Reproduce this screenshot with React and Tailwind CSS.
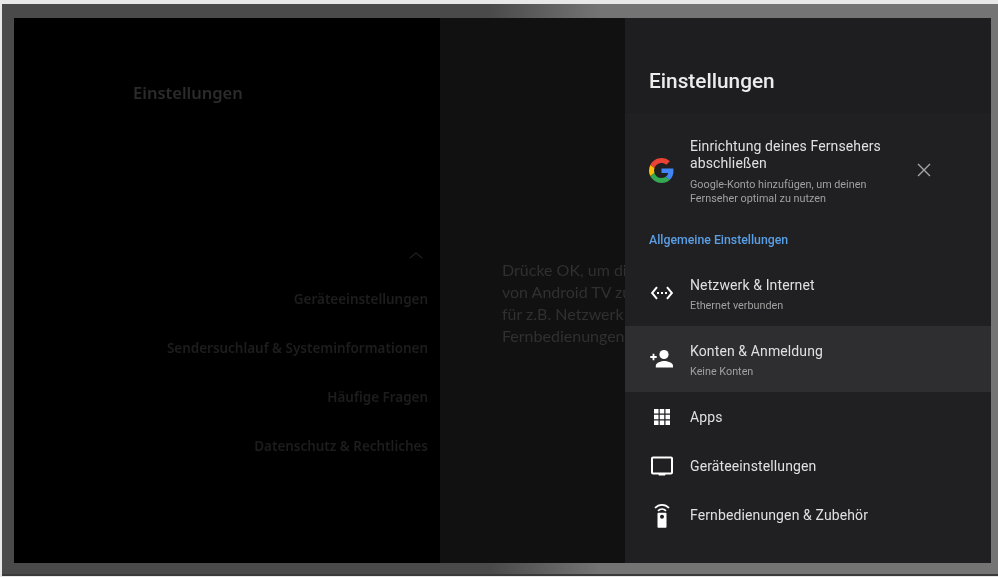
const roboto = { fontFamily: "Roboto, sans-serif" };

const GoogleIcon = () => (
  <svg viewBox="0 0 48 48" className="w-[25px] h-[25px] shrink-0">
    <path fill="#EA4335" d="M24 9.5c3.54 0 6.71 1.22 9.21 3.6l6.85-6.85C35.9 2.38 30.47 0 24 0 14.62 0 6.51 5.38 2.56 13.22l7.98 6.19C12.43 13.72 17.74 9.5 24 9.5z" />
    <path fill="#4285F4" d="M46.98 24.55c0-1.57-.15-3.09-.38-4.55H24v9.02h12.94c-.58 2.96-2.26 5.48-4.78 7.18l7.73 6c4.51-4.18 7.09-10.36 7.09-17.65z" />
    <path fill="#FBBC05" d="M10.53 28.59c-.48-1.45-.76-2.99-.76-4.59s.27-3.14.76-4.59l-7.98-6.19C.92 16.46 0 20.12 0 24c0 3.88.92 7.54 2.56 10.78l7.97-6.19z" />
    <path fill="#34A853" d="M24 48c6.48 0 11.93-2.13 15.89-5.81l-7.73-6c-2.15 1.45-4.92 2.3-8.16 2.3-6.26 0-11.57-4.22-13.47-9.91l-7.98 6.19C6.51 42.62 14.62 48 24 48z" />
  </svg>
);

const EthernetIcon = () => (
  <svg viewBox="0 0 24 24" className="w-[24px] h-[24px]" fill="#fff">
    <path d="M7.77 6.76L6.23 5.48.82 12l5.41 6.52 1.54-1.28L3.42 12l4.35-5.24zM7 13h2v-2H7v2zm10-2h-2v2h2v-2zm-6 2h2v-2h-2v2zm6.77-7.52l-1.54 1.28L20.58 12l-4.35 5.24 1.54 1.28L23.18 12l-5.41-6.52z" />
  </svg>
);

const PersonAddIcon = () => (
  <svg viewBox="0 -2 24 24" className="w-[24px] h-[24px]" fill="#fff">
    <path d="M.3 7.100h2.300V4.800h1.800v2.300h2.300v1.800H4.400v2.300H2.600V8.900H.3z" />
    <circle cx="14" cy="5.500" r="4.600" />
    <path d="M5.800 18.500v-1.800c0-3.100 5.700-4.700 8.500-4.700s8.700 1.600 8.700 4.700v1.800z" />
  </svg>
);

const AppsIcon = () => (
  <svg viewBox="0 0 24 24" className="w-[24px] h-[24px]" fill="#fff">
    <path d="M4 4h4.500v4.500H4zM9.750 4h4.500v4.500h-4.500zM15.500 4H20v4.500h-4.500zM4 9.750h4.500v4.500H4zM9.750 9.750h4.500v4.500h-4.500zM15.500 9.750H20v4.500h-4.500zM4 15.500h4.500V20H4zM9.750 15.500h4.500V20h-4.500zM15.500 15.500H20V20h-4.500z" />
  </svg>
);

const TvIcon = () => (
  <svg viewBox="0 0 24 24" className="w-[24px] h-[24px]" fill="#fff">
    <path d="M21 2.500H3c-1.100 0-2 .9-2 2v14c0 1.100.9 2 2 2h5.500c0 .6.4 1 1 1h5c.6 0 1-.4 1-1H21c1.100 0 2-.9 2-2l.02-14c0-1.100-.92-2-2.020-2zm0 16H3v-14h18v14z" />
  </svg>
);

const RemoteIcon = () => (
  <svg viewBox="0 0 24 30" className="w-[24px] h-[30px]">
    <path d="M5 8c4-4.200 10-4.200 14 0" fill="none" stroke="#fff" strokeWidth="1.800" />
    <path d="M8 10.800c2.300-2.200 5.700-2.200 8 0" fill="none" stroke="#fff" strokeWidth="1.800" />
    <path fill="#fff" fillRule="evenodd" d="M8.500 12.800h7c.6 0 1 .4 1 1v13c0 .6-.4 1-1 1h-7c-.6 0-1-.4-1-1v-13c0-.6.4-1 1-1zM12 14.800a2 2 0 1 0 0 4 2 2 0 0 0 0-4z" />
  </svg>
);

const Row = ({ icon, title, subtitle, active, tall }) => (
  <div className={`flex items-center pl-6 ${tall ? "h-[66px]" : "h-[49px]"} ${active ? "bg-[#2e2e31]" : ""}`}>
    <div className="w-[25px] flex justify-center shrink-0">{icon}</div>
    <div className={`ml-4 ${subtitle ? "mt-[2px]" : ""}`}>
      <div className="text-[14px] leading-[20px] text-[#e0e0e0] tracking-[0.12px]">{title}</div>
      {subtitle && <div className="text-[10.800px] leading-[14px] mt-[4px] text-[#a0a0a0]">{subtitle}</div>}
    </div>
  </div>
);

const LeftItem = ({ children }) => (
  <div className="h-[49px] flex items-center justify-end text-[13.450px] font-semibold text-[#1d1d1d]">{children}</div>
);

export default function App() {
  return (
    <div className="w-[998px] h-[577px] bg-[#e8e8e8] pt-[4px] pl-[2px] pb-[1px] overflow-hidden">
      <div className="h-full bg-[linear-gradient(to_right,#4a4a4a_0%,#4a4a4a_49%,#747474_60%,#747474_100%)] pt-[14px] pl-[12px] pr-[7px] pb-[11px] border-b-2 border-[#3a3a3a]">
        <div className="flex h-full blur-[0.4px]">
          {/* Dimmed left column */}
          <div className="w-[426px] bg-black pr-3 shrink-0" style={{ fontFamily: "'Noto Sans', sans-serif" }}>
            <div className="pl-[119px] pt-[61px] text-[16.500px] leading-[28px] font-semibold text-[#2b2b2b]">Einstellungen</div>
            <div className="flex justify-end pr-[5px] mt-[144px] h-[15px]">
              <svg viewBox="0 0 16 10" className="w-[14px] h-[9px]" fill="none" stroke="#262626" strokeWidth="1.200">
                <path d="M1 8l7-6 7 6" />
              </svg>
            </div>
            <div className="mt-[9px]">
              <LeftItem>Geräteeinstellungen</LeftItem>
              <LeftItem>Sendersuchlauf &amp; Systeminformationen</LeftItem>
              <LeftItem>Häufige Fragen</LeftItem>
              <LeftItem>Datenschutz &amp; Rechtliches</LeftItem>
            </div>
          </div>

          {/* Dimmed middle column, cut off by the panel */}
          <div className="w-[185px] bg-[#111112] shrink-0 overflow-hidden pl-[62px] pt-[241px] text-[16px] leading-[22px] text-[#303030] whitespace-nowrap" style={{ fontFamily: "Lato, sans-serif" }}>
            <div>Drücke OK, um die</div>
            <div>von Android TV zu</div>
            <div>für z.B. Netzwerk</div>
            <div>Fernbedienungen</div>
          </div>

          {/* Settings panel */}
          <div className="flex-1 bg-[#202023]" style={roboto}>
            <div className="h-[95px] pl-6 pt-[49px] text-[20.800px] leading-[28px] font-medium text-[#ececec] bg-[#1e1e20]">Einstellungen</div>

            <div className="flex items-center pl-6 pt-[2px] h-[112px]">
              <GoogleIcon />
              <div className="ml-4 mt-[4px] w-[210px]">
                <div className="text-[14px] leading-[17px] text-[#e0e0e0] tracking-[0.12px]">Einrichtung deines Fernsehers abschließen</div>
                <div className="text-[10.800px] leading-[14.500px] mt-[6px] text-[#a0a0a0]">Google-Konto hinzufügen, um deinen Fernseher optimal zu nutzen</div>
              </div>
              <svg viewBox="0 0 14 14" className="w-[14px] h-[14px] ml-[17px]" fill="none" stroke="#a6a6a6" strokeWidth="1.400">
                <path d="M1 1l12 12M13 1L1 13" />
              </svg>
            </div>

            <div className="pl-6 h-[35px] pt-[6px] text-[12.300px] leading-[18px] font-medium text-[#5a9fe6]">Allgemeine Einstellungen</div>

            <Row tall icon={<EthernetIcon />} title="Netzwerk & Internet" subtitle="Ethernet verbunden" />
            <Row tall active icon={<PersonAddIcon />} title="Konten & Anmeldung" subtitle="Keine Konten" />
            <Row icon={<AppsIcon />} title="Apps" />
            <Row icon={<TvIcon />} title="Geräteeinstellungen" />
            <Row icon={<RemoteIcon />} title="Fernbedienungen & Zubehör" />
          </div>
        </div>
      </div>
    </div>
  );
}
